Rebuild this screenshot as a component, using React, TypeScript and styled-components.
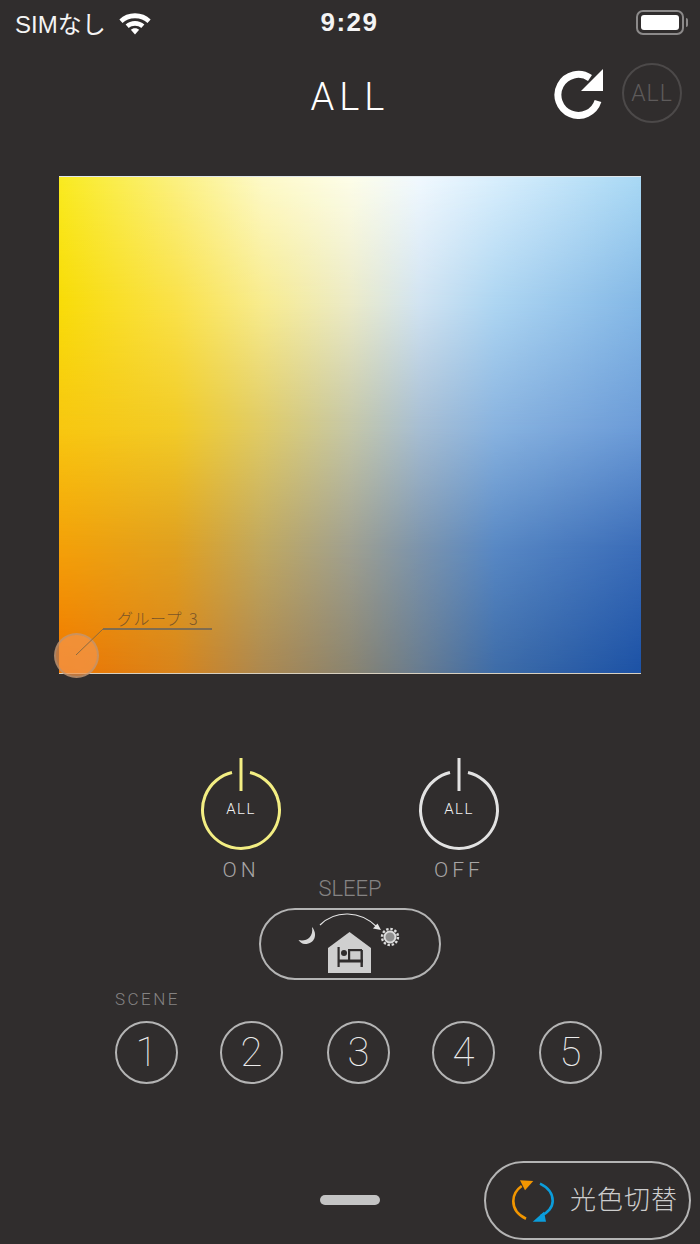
import React from "react";
import styled, { createGlobalStyle } from "styled-components";

const GlobalStyle = createGlobalStyle`
  html, body {
    margin: 0;
    padding: 0;
    background: #302d2d;
  }
  * {
    box-sizing: border-box;
  }
`;

const scenes = [1, 2, 3, 4, 5];

// colour rows of the light picker, top to bottom
const fieldRows = [
  ["#f9ea20", "#fbf080", "#fdf9c8", "#fdfde8", "#f0f8fe", "#d8eefc", "#a8d8f4"],
  ["#f8dc08", "#fae24a", "#f8ec90", "#ecebc8", "#d2e4f2", "#aed6f2", "#84b8e6"],
  ["#f8c810", "#f2cc28", "#e0cc68", "#c6c8a8", "#a8bfd4", "#8ab4e0", "#6c9cd8"],
  ["#f4a008", "#e0a020", "#c0a860", "#a0a090", "#7c94ac", "#5888c4", "#3a6cb8"],
  ["#f07600", "#d8841c", "#ac8850", "#8a8470", "#687c90", "#3e6ca8", "#1c52a6"],
];
const stops = [0, 20, 35, 50, 62, 75, 100];

const rowGradient = (colors: string[]) =>
  `linear-gradient(to right, ${colors.map((c, i) => `${c} ${stops[i]}%`).join(", ")})`;

const PowerIcon = ({ color }: { color: string }) => (
  <svg width="84" height="94" viewBox="0 0 84 94" fill="none">
    <path
      d="M33 16.5 A38.5 38.5 0 1 0 51 16.5"
      stroke={color}
      strokeWidth="3"
      strokeLinecap="butt"
    />
    <line x1="42" y1="2" x2="42" y2="35" stroke={color} strokeWidth="3" />
  </svg>
);

const SleepIcon = () => (
  <svg width="130" height="66" viewBox="0 0 130 66" fill="none">
    <path
      d="M27 19 C33 26 30 36 20 36 C17 36 15 34 13.5 32 C20 34 29 30 27 19 Z"
      fill="#d8d8d8"
    />
    <path d="M35 17 C50 2 75 2 92 19" stroke="#e6e6e6" strokeWidth="1.2" />
    <path d="M96 22 L88 20.5 L92.5 15.5 Z" fill="#e6e6e6" />
    <path d="M64.5 24 L86 40 V65 H43 V40 Z" fill="#cfcfcf" />
    <g fill="#302d2d">
      <rect x="52.5" y="39" width="2.2" height="20" />
      <circle cx="59" cy="45" r="3" />
      <rect x="54" y="51.5" width="24" height="3" />
      <rect x="75.5" y="42" width="2.4" height="17" />
      <rect x="63" y="41" width="14" height="2.2" />
      <rect x="63" y="41" width="2.2" height="11" />
    </g>
    <circle cx="105" cy="29" r="5.5" stroke="#dcdcdc" strokeWidth="2" fill="#8f8f8f" />
    <circle cx="105" cy="29" r="8" stroke="#dcdcdc" strokeWidth="2.4" strokeDasharray="2.4 1.8" />
  </svg>
);

const SwitchIcon = () => (
  <svg width="42" height="46" viewBox="0 0 42 46" fill="none">
    <path d="M14 40.7 C4 36 1.3 30 1.3 23 C1.3 17 4 12 9.7 8" stroke="#f29600" strokeWidth="2.6" />
    <path d="M8 2.3 L21.3 3 L13 12.3 Z" fill="#f29600" />
    <path d="M28 5.7 C37 10 40.7 16 40.7 23 C40.7 29 36 35 28.7 38" stroke="#0b9ddb" strokeWidth="2.6" />
    <path d="M20.7 43.7 L34 43.7 L32 33.7 Z" fill="#0b9ddb" />
  </svg>
);

export default function App() {
  return (
    <Page>
      <GlobalStyle />
      <StatusBar>
        <StatusLeft>
          <span>SIMなし</span>
          <svg viewBox="0 0 32 24" width="34" height="25">
            <path
              d="M16 3 C22 3 27 5 31 9 L28 12.5 C25 9.5 21 8 16 8 C11 8 7 9.5 4 12.5 L1 9 C5 5 10 3 16 3 Z"
              fill="#fff"
            />
            <path
              d="M16 10.5 C19.5 10.5 22.5 11.6 25 14 L22 17.2 C20.4 15.7 18.4 15 16 15 C13.6 15 11.6 15.7 10 17.2 L7 14 C9.5 11.6 12.5 10.5 16 10.5 Z"
              fill="#fff"
            />
            <path d="M16 17.5 C17.8 17.5 19 18 20 19 L16 23.5 L12 19 C13 18 14.2 17.5 16 17.5 Z" fill="#fff" />
          </svg>
        </StatusLeft>
        <Clock>9:29</Clock>
        <Battery>
          <BatteryFill />
          <BatteryCap />
        </Battery>
      </StatusBar>

      <Header>
        <span />
        <Title>ALL</Title>
        <HeaderActions>
          <svg width="52" height="52" viewBox="0 0 52 52" fill="none">
            <path d="M44 34 A20.5 20.5 0 1 1 36 11" stroke="#fff" strokeWidth="7" />
            <path d="M49 2 V24 H27 Z" fill="#fff" />
          </svg>
          <AllBadge>ALL</AllBadge>
        </HeaderActions>
      </Header>

      <ColorField>
        {fieldRows
          .slice()
          .reverse()
          .map((colors, i) => (
            <FieldRow
              key={i}
              $last={i === 0}
              $pos={(fieldRows.length - 1 - i) * 25}
              style={{ backgroundImage: rowGradient(colors) }}
            />
          ))}
        <Marker>
          <MarkerCircle />
          <MarkerLabel>グループ 3</MarkerLabel>
          <MarkerLine width="40" height="40" viewBox="0 0 40 40">
            <path d="M0 40 L27 14" stroke="#8a6a40" strokeWidth="1" fill="none" />
          </MarkerLine>
          <MarkerRule />
        </Marker>
      </ColorField>

      <PowerRow>
        <PowerButton>
          <PowerIcon color="#f3ee83" />
          <PowerText>ALL</PowerText>
          <PowerLabel>ON</PowerLabel>
        </PowerButton>
        <PowerButton>
          <PowerIcon color="#e2e2e2" />
          <PowerText>ALL</PowerText>
          <PowerLabel>OFF</PowerLabel>
        </PowerButton>
      </PowerRow>

      <SleepLabel>SLEEP</SleepLabel>
      <SleepButton>
        <SleepIcon />
      </SleepButton>

      <SceneSection>
        <SceneLabel>SCENE</SceneLabel>
        <SceneRow>
          {scenes.map((n) => (
            <SceneButton key={n}>{n}</SceneButton>
          ))}
        </SceneRow>
      </SceneSection>

      <Footer>
        <HomeHandle />
        <SwitchButton>
          <SwitchIcon />
          <SwitchText>光色切替</SwitchText>
        </SwitchButton>
      </Footer>
    </Page>
  );
}

const Page = styled.div`
  width: 700px;
  height: 1244px;
  overflow: hidden;
  background: #302d2d;
  color: #fff;
  font-family: "Roboto", "Noto Sans CJK JP", sans-serif;
  display: flex;
  flex-direction: column;
`;

const StatusBar = styled.div`
  height: 46px;
  padding: 0 16px 2px 15px;
  display: grid;
  grid-template-columns: 1fr auto 1fr;
  align-items: center;
  font-family: "Liberation Sans", "Noto Sans CJK JP", sans-serif;
`;

const StatusLeft = styled.div`
  display: flex;
  align-items: center;
  gap: 12px;
  font-size: 24px;
  font-weight: 400;
  color: #f4f4f4;

  svg {
    display: block;
  }
`;

const Clock = styled.div`
  font-size: 26px;
  font-weight: 700;
  letter-spacing: 1.5px;
  color: #f4f4f4;
`;

const Battery = styled.div`
  justify-self: end;
  position: relative;
  width: 48px;
  height: 25px;
  padding: 3px;
  border: 2px solid #8c8a8a;
  border-radius: 7px;
`;

const BatteryFill = styled.div`
  width: 100%;
  height: 100%;
  background: #fff;
  border-radius: 3px;
`;

const BatteryCap = styled.div`
  position: absolute;
  right: -6px;
  top: 6px;
  width: 2px;
  height: 9px;
  background: #8c8a8a;
  border-radius: 0 2px 2px 0;
`;

const Header = styled.div`
  height: 84px;
  display: grid;
  grid-template-columns: 1fr auto 1fr;
  align-items: center;
`;

const Title = styled.div`
  font-size: 38px;
  font-weight: 300;
  letter-spacing: 5px;
  padding-top: 17px;
`;

const HeaderActions = styled.div`
  display: flex;
  align-items: center;
  justify-content: flex-end;
  gap: 16px;
  padding: 10px 18px 0 0;

  svg {
    display: block;
  }
`;

const AllBadge = styled.div`
  width: 60px;
  height: 60px;
  border: 2px solid #4c4949;
  border-radius: 50%;
  color: #5e5b5b;
  display: flex;
  align-items: center;
  justify-content: center;
  font-size: 23px;
  font-weight: 300;
  letter-spacing: 1px;
`;

const ColorField = styled.div`
  position: relative;
  margin: 46px 59px 0;
  height: 498px;
  flex: none;
  border-top: 1px solid #dfe6ea;
  border-bottom: 1px solid #d8d0c0;
`;

const FieldRow = styled.div<{ $pos: number; $last: boolean }>`
  position: absolute;
  inset: 0;
  ${({ $pos, $last }) =>
    $last
      ? ""
      : `
    -webkit-mask-image: linear-gradient(to bottom, #000 ${$pos}%, transparent ${$pos + 25}%);
    mask-image: linear-gradient(to bottom, #000 ${$pos}%, transparent ${$pos + 25}%);
  `}
`;

const Marker = styled.div`
  position: absolute;
  left: -5px;
  bottom: -5px;
  width: 160px;
  height: 70px;
`;

const MarkerCircle = styled.div`
  position: absolute;
  left: 0;
  bottom: 0;
  width: 45px;
  height: 45px;
  border-radius: 50%;
  background: rgba(243, 150, 75, 0.72);
  border: 2px solid rgba(150, 150, 150, 0.42);
`;

const MarkerLabel = styled.div`
  position: absolute;
  left: 63px;
  top: 0;
  font-family: "Noto Sans CJK JP", sans-serif;
  font-size: 16px;
  font-weight: 300;
  line-height: 20px;
  letter-spacing: 0.5px;
  word-spacing: 3px;
  color: #7a5528;
  white-space: nowrap;
`;

const MarkerLine = styled.svg`
  position: absolute;
  left: 22px;
  bottom: 23px;
`;

const MarkerRule = styled.div`
  position: absolute;
  left: 49px;
  top: 20px;
  width: 109px;
  height: 2px;
  background: #7f6c50;
`;

const PowerRow = styled.div`
  margin-top: 82px;
  display: flex;
  justify-content: center;
  gap: 134px;
`;

const PowerButton = styled.div`
  position: relative;
  width: 84px;
  display: flex;
  flex-direction: column;
  align-items: center;

  svg {
    display: block;
  }
`;

const PowerText = styled.div`
  position: absolute;
  top: 44px;
  left: 0;
  right: 0;
  text-align: center;
  font-size: 15px;
  font-weight: 300;
  line-height: 18px;
  letter-spacing: 1.5px;
  color: #f2f2f2;
`;

const PowerLabel = styled.div`
  margin-top: 8px;
  font-size: 21px;
  font-weight: 300;
  line-height: 24px;
  letter-spacing: 4px;
  color: #a8a6a6;
`;

const SleepLabel = styled.div`
  margin-top: -5px;
  text-align: center;
  font-size: 22px;
  line-height: 24px;
  font-weight: 300;
  color: #858383;
`;

const SleepButton = styled.div`
  margin: 7px auto 0;
  width: 182px;
  height: 72px;
  flex: none;
  border: 2px solid #b4b4b4;
  border-radius: 36px;
  display: flex;
  align-items: flex-end;
  justify-content: center;
  padding-bottom: 4px;
`;

const SceneSection = styled.div`
  margin-top: 9px;
  padding-left: 115px;
`;

const SceneLabel = styled.div`
  font-size: 17px;
  line-height: 20px;
  font-weight: 300;
  letter-spacing: 2.5px;
  color: #858383;
`;

const SceneRow = styled.div`
  margin-top: 12px;
  display: flex;
  gap: 42px;
`;

const SceneButton = styled.div`
  width: 63px;
  height: 63px;
  border: 2px solid #b4b4b4;
  border-radius: 50%;
  display: flex;
  align-items: center;
  justify-content: center;
  font-size: 40px;
  font-weight: 100;
  color: #ececec;

  &:nth-child(3) {
    margin-left: 2px;
  }
  &:nth-child(5) {
    margin-left: 2px;
  }
`;

const Footer = styled.div`
  margin-top: auto;
  padding: 0 9px 4px 320px;
  display: flex;
  align-items: center;
  justify-content: space-between;
`;

const HomeHandle = styled.div`
  width: 60px;
  height: 10px;
  border-radius: 5px;
  background: #c4c4c4;
  margin-top: -2px;
`;

const SwitchButton = styled.div`
  width: 207px;
  height: 79px;
  border: 2px solid #b4b4b4;
  border-radius: 40px;
  display: flex;
  align-items: center;
  gap: 16px;
  padding-left: 26px;

  svg {
    display: block;
    flex: none;
  }
`;

const SwitchText = styled.span`
  padding-bottom: 6px;
  font-family: "Noto Sans CJK JP", sans-serif;
  font-size: 26px;
  font-weight: 300;
  letter-spacing: 1px;
  color: #cccccc;
`;
